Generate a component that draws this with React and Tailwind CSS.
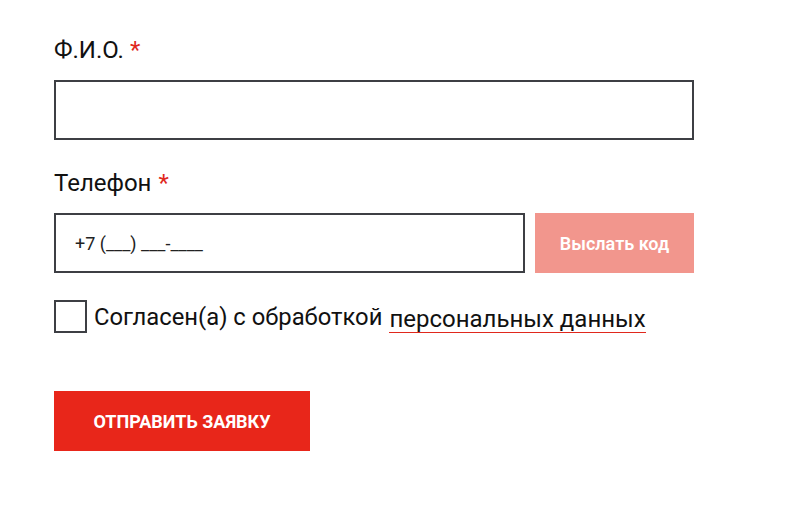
export default function App() {
  return (
    <div className="min-h-[505px] w-[796px] bg-white font-['Roboto',sans-serif] text-[#111]">
      <form className="flex w-[694px] flex-col pl-[54px] pt-[36px]">
        <label className="flex items-baseline gap-[6px] text-[24px] leading-[28px]">
          Ф.И.О.
          <span className="text-[#e0281d]">*</span>
        </label>
        <input
          type="text"
          className="mt-[16px] h-[60px] w-[640px] border-2 border-[#3d3f44] bg-white px-[18px] outline-none"
        />

        <label className="mt-[29px] flex items-baseline gap-[7px] text-[24px] leading-[28px]">
          Телефон
          <span className="text-[#e0281d]">*</span>
        </label>
        <div className="mt-[16px] flex gap-[10px]">
          <input
            type="text"
            placeholder="+7 (___) ___-____"
            className="h-[60px] w-[471px] shrink-0 border-2 border-[#3d3f44] bg-white px-[19px] text-[18px] text-[#222] outline-none placeholder:text-[#222]"
          />
          <button
            type="button"
            className="h-[60px] w-[159px] shrink-0 bg-[#f2968d] text-[18px] font-semibold text-white"
          >
            Выслать код
          </button>
        </div>

        <div className="mt-[27px] flex items-center gap-[7px]">
          <span className="h-[33px] w-[33px] shrink-0 border-2 border-[#3d3f44] bg-white" />
          <span className="text-[23.8px] leading-[28px]">Согласен(а) с обработкой</span>
          <a className="mt-[6px] border-b border-[#e0281d] text-[24px] leading-[26px]">
            персональных данных
          </a>
        </div>

        <button
          type="button"
          className="mt-[58px] h-[60px] w-[256px] bg-[#e8261a] text-[18px] font-bold uppercase text-white"
        >
          Отправить заявку
        </button>
      </form>
    </div>
  );
}
